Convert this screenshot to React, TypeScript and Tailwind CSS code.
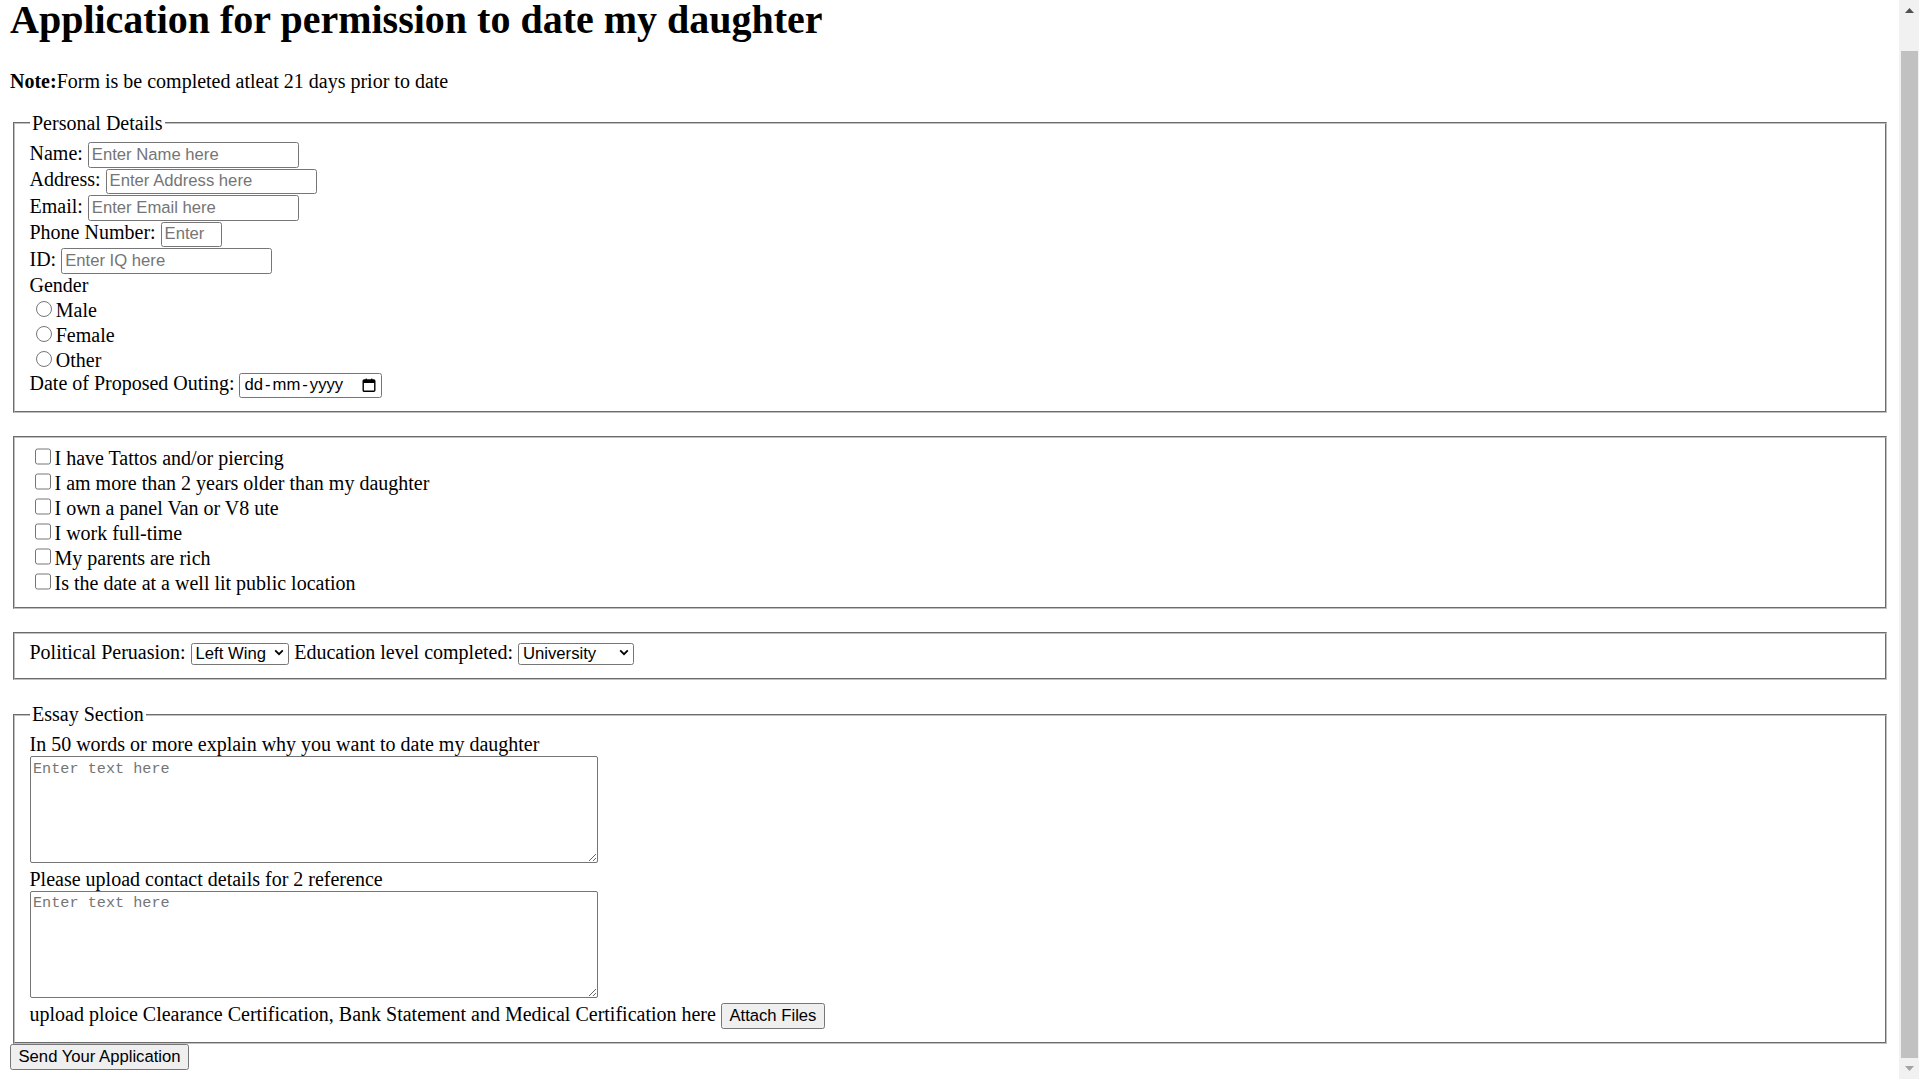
import React, { useEffect, useRef } from 'react';

const fieldset = "mx-[2.5px] [border:2px_groove_#c0c0c0] px-[15px] pt-[7px] pb-[12.5px]";
const control = "font-['Liberation_Sans',sans-serif] text-[16.67px] leading-[normal] text-black";
const textInput = `${control} h-[25.5px] my-[0.5px] border border-[#767676] rounded-[2.5px] bg-white px-[3px] placeholder:text-[#757575] align-baseline`;
const check = "w-[16.25px] h-[16.25px] mt-[3.75px] mr-[3.75px] mb-[3.75px] ml-[5px] align-baseline";
const radio = "w-[16.25px] h-[16.25px] mt-[3.75px] mr-[3.75px] mb-0 ml-[6.25px] align-baseline";
const select = `${control} appearance-none h-[22.5px] border border-[#767676] rounded-[2.5px] bg-white pl-[4px] pr-[20px] align-baseline`;
const textarea = "w-[568px] h-[106.8px] border border-[#767676] rounded-[2px] bg-white p-[2.5px] font-['Liberation_Mono',monospace] text-[15.2px] leading-[normal] placeholder:text-[#757575] resize align-baseline";
const button = `${control} h-[26.5px] px-[7.5px] border border-[#767676] rounded-[2.5px] bg-[#efefef] align-baseline`;

const checks = [
  'I have Tattos and/or piercing',
  'I am more than 2 years older than my daughter',
  'I own a panel Van or V8 ute',
  'I work full-time',
  'My parents are rich',
  'Is the date at a well lit public location',
];

const CalendarIcon = () => (
  <svg width="14" height="14" viewBox="0 0 14 14" className="ml-auto">
    <path d="M2.2 2h9.6a1 1 0 0 1 1 1v9.3a1 1 0 0 1-1 1H2.2a1 1 0 0 1-1-1V3a1 1 0 0 1 1-1z" fill="none" stroke="#000" strokeWidth="1.4" />
    <rect x="1.2" y="2" width="11.6" height="3" fill="#000" />
    <rect x="3.6" y="0.6" width="1.4" height="2" fill="#000" />
    <rect x="9" y="0.6" width="1.4" height="2" fill="#000" />
  </svg>
);

const Select = ({ width, children, value }: { width: string; children: React.ReactNode; value: string }) => (
  <span className="relative inline-block align-baseline">
    <select className={`${select} ${width}`} defaultValue={value}>
      {children}
    </select>
    <svg width="10" height="7" viewBox="0 0 10 7" className="absolute right-[5px] top-[8px] pointer-events-none">
      <path d="M1.2 1.4 5 5.2 8.8 1.4" fill="none" stroke="#000" strokeWidth="1.8" />
    </svg>
  </span>
);

// classic window scrollbar, page scrolled to its end
const Scrollbar = () => (
  <div className="w-[20px] shrink-0 bg-[#f1f1f1] flex flex-col">
    <div className="h-[21px] flex items-center justify-center">
      <svg width="9" height="5" viewBox="0 0 9 5">
        <polygon points="0,5 4.5,0 9,5" fill="#505050" />
      </svg>
    </div>
    <div className="flex-1 flex flex-col pt-[30px] pl-[2px] pr-[1px]">
      <div className="flex-1 bg-[#c1c1c1]" />
    </div>
    <div className="h-[21px] flex items-center justify-center">
      <svg width="9" height="5" viewBox="0 0 9 5">
        <polygon points="0,0 9,0 4.5,5" fill="#a3a3a3" />
      </svg>
    </div>
  </div>
);

export default function App() {
  const pageRef = useRef<HTMLDivElement>(null);

  // the screenshot was taken scrolled to the end of the page
  useEffect(() => {
    const el = pageRef.current;
    if (el) el.scrollTop = el.scrollHeight;
  }, []);

  return (
    <div className="flex h-screen bg-white text-black font-['Liberation_Serif',serif] text-[20px] leading-[normal]">
      <div ref={pageRef} className="flex-1 min-w-0 overflow-y-scroll [scrollbar-width:none]">
        <div className="mx-[10px] mt-[10px] pb-[8.6px]">
          <h1 className="text-[40px] font-bold my-[26.8px]">Application for permission to date my daughter</h1>
          <p className="mt-[20px] mb-[19px]">
            <b>Note:</b>Form is be completed atleat 21 days prior to date
          </p>

          <form onSubmit={(e) => e.preventDefault()}>
            <fieldset className={fieldset}>
              <legend className="px-[2.5px]">Personal Details</legend>
              <label>Name: </label>
              <input type="text" placeholder="Enter Name here" className={`${textInput} w-[211px]`} />
              <br />
              <label>Address: </label>
              <input type="text" placeholder="Enter Address here" className={`${textInput} w-[211px]`} />
              <br />
              <label>Email: </label>
              <input type="email" placeholder="Enter Email here" className={`${textInput} w-[211px]`} />
              <br />
              <label>Phone Number: </label>
              <input type="tel" placeholder="Enter" className={`${textInput} w-[61px]`} />
              <br />
              <label>ID: </label>
              <input type="text" placeholder="Enter IQ here" className={`${textInput} w-[211px]`} />
              <br />
              <label>Gender</label>
              <br />
              <input type="radio" name="gender" className={radio} />
              <label>Male</label>
              <br />
              <input type="radio" name="gender" className={radio} />
              <label>Female</label>
              <br />
              <input type="radio" name="gender" className={radio} />
              <label>Other</label>
              <br />
              <label>Date of Proposed Outing: </label>
              <span className={`${control} inline-flex items-center w-[142.5px] h-[25px] my-[0.5px] border border-[#767676] rounded-[2.5px] pl-[4px] pr-[4.5px] align-baseline`}>
                <span>dd</span>
                <span className="mx-[2px]">-</span>
                <span>mm</span>
                <span className="mx-[2px]">-</span>
                <span>yyyy</span>
                <CalendarIcon />
              </span>
            </fieldset>

            <fieldset className={`${fieldset} mt-[23px]`}>
              {checks.map((c) => (
                <React.Fragment key={c}>
                  <input type="checkbox" className={check} />
                  <label>{c}</label>
                  <br />
                </React.Fragment>
              ))}
            </fieldset>

            <fieldset className={`${fieldset} mt-[23.4px]`}>
              <label>Political Peruasion: </label>
              <Select width="w-[98.6px]" value="left">
                <option value="left">Left Wing</option>
                <option value="right">Right Wing</option>
                <option value="centre">Centre</option>
              </Select>{' '}
              <label>Education level completed: </label>
              <Select width="w-[116px]" value="uni">
                <option value="uni">University</option>
                <option value="high">High School</option>
                <option value="trade">Trade Certificate</option>
              </Select>
            </fieldset>

            <fieldset className={`${fieldset} mt-[23.4px]`}>
              <legend className="px-[2.5px]">Essay Section</legend>
              <label>In 50 words or more explain why you want to date my daughter</label>
              <br />
              <textarea placeholder="Enter text here" className={textarea} />
              <br />
              <label>Please upload contact details for 2 reference</label>
              <br />
              <textarea placeholder="Enter text here" className={textarea} />
              <br />
              <label>upload ploice Clearance Certification, Bank Statement and Medical Certification here </label>
              <button type="button" className={button}>Attach Files</button>
            </fieldset>
            <button type="submit" className={button}>Send Your Application</button>
          </form>
        </div>
      </div>
      <Scrollbar />
    </div>
  );
}
